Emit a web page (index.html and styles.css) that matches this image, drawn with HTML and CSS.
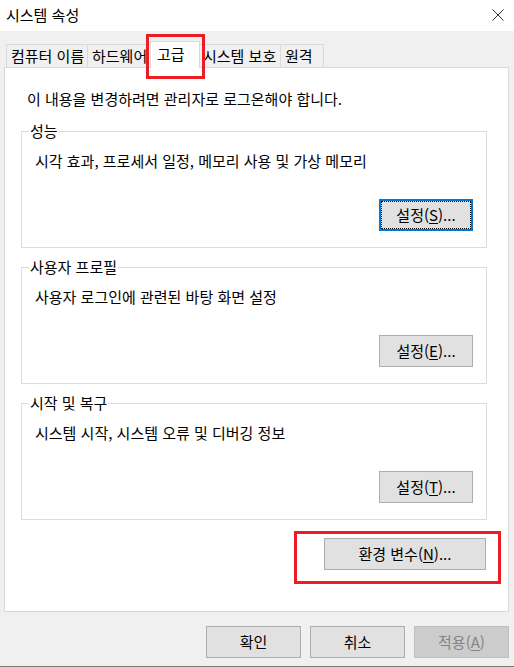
FILE: index.html
```html
<!DOCTYPE html>
<html lang="ko">
<head>
<meta charset="utf-8">
<title>시스템 속성</title>
<link rel="stylesheet" href="styles.css">
</head>
<body>
<div class="window">
  <div class="titlebar">
    <span class="title">시스템 속성</span>
    <svg class="close" width="12" height="12" viewBox="0 0 12 12"><path d="M0.5 0.5 L11.5 11.5 M11.5 0.5 L0.5 11.5" stroke="#333" stroke-width="1" fill="none"/></svg>
  </div>
  <div class="dialog">
    <div class="tabs">
      <div class="tab t1">컴퓨터 이름</div>
      <div class="tab t2">하드웨어</div>
      <div class="tab selected">고급<span class="mark mark-tab"></span></div>
      <div class="tab t4">시스템 보호</div>
      <div class="tab t5">원격</div>
    </div>
    <div class="panel">
      <p class="notice">이 내용을 변경하려면 관리자로 로그온해야 합니다.</p>
      <fieldset class="group g1">
        <legend>성능</legend>
        <p class="desc">시각 효과, 프로세서 일정, 메모리 사용 및 가상 메모리</p>
        <div class="row"><button class="btn focused">설정(<u>S</u>)...</button></div>
      </fieldset>
      <fieldset class="group g2">
        <legend>사용자 프로필</legend>
        <p class="desc">사용자 로그인에 관련된 바탕 화면 설정</p>
        <div class="row"><button class="btn">설정(<u>E</u>)...</button></div>
      </fieldset>
      <fieldset class="group g3">
        <legend>시작 및 복구</legend>
        <p class="desc">시스템 시작, 시스템 오류 및 디버깅 정보</p>
        <div class="row"><button class="btn">설정(<u>T</u>)...</button></div>
      </fieldset>
      <div class="envrow">
        <button class="btn env">환경 변수(<u>N</u>)...<span class="mark mark-env"></span></button>
      </div>
    </div>
    <div class="footer">
      <button class="btn foot">확인</button>
      <button class="btn foot">취소</button>
      <button class="btn foot disabled">적용(<u>A</u>)</button>
    </div>
  </div>
</div>
</body>
</html>
```
FILE: styles.css
```css
* { box-sizing: border-box; }
html, body { margin: 0; padding: 0; }
body {
  width: 514px;
  height: 667px;
  overflow: hidden;
  background: #f0f0f0;
  font-family: "Noto Sans CJK KR", "Noto Sans", sans-serif;
  font-size: 15px;
  color: #000;
}
.window {
  height: 667px;
  display: flex;
  flex-direction: column;
  border-bottom: 1px solid #7a7a7a;
}
.titlebar {
  height: 31px;
  background: #fff;
  display: flex;
  align-items: center;
  justify-content: space-between;
  padding: 0 10px 2px 6px;
}
.title { font-size: 15px; line-height: 20px; color: #000; }
.close { display: block; }
.dialog {
  flex: 1;
  background: #f0f0f0;
  display: flex;
  flex-direction: column;
}
.tabs {
  display: flex;
  align-items: flex-end;
  height: 27px;
  margin-top: 9px;
  padding-left: 6px;
}
.tab {
  height: 23px;
  line-height: 21px;
  padding: 0 4px;
  border: 1px solid #d9d9d9;
  border-bottom: none;
  background: #f0f0f0;
  white-space: nowrap;
  color: #000;
}
.tab + .tab { border-left: none; }
.t1 { width: 82px; }
.t2 { width: 64px; overflow: hidden; }
.t4 { width: 82px; border-left: none; }
.t5 { width: 43px; }
.tab.selected {
  position: relative;
  z-index: 2;
  height: 27px;
  width: 50px;
  margin: 0 -1px -1px -2px;
  padding: 0 6px;
  line-height: 24px;
  background: #fff;
  border: 1px solid #d9d9d9;
  border-bottom: none;
}
.mark {
  position: absolute;
  border: 3px solid #ec1c24;
  pointer-events: none;
}
.mark-tab { left: -5px; top: -8px; width: 59px; height: 45px; }
.panel {
  position: relative;
  z-index: 1;
  margin-left: 4px;
  width: 505px;
  height: 545px;
  background: #fff;
  border: 1px solid #d9d9d9;
  padding: 21px 0 0 16px;
}
.notice {
  margin: 0 0 12px 6px;
  line-height: 20px;
}
.group {
  width: 466px;
  margin: 0;
  padding: 0 13px 16px 13px;
  border: 1px solid #dcdcdc;
  min-inline-size: 0;
}
.g2, .g3 { margin-top: 9px; }
.group legend {
  padding: 0 1px;
  margin-left: -6px;
  line-height: 20px;
}
.desc {
  margin: 10px 0 0 0;
  line-height: 20px;
}
.row {
  display: flex;
  justify-content: flex-end;
  margin-top: 28px;
  margin-right: 0;
}
.btn {
  font-family: inherit;
  font-size: 15px;
  color: #000;
  background: #e1e1e1;
  border: 1px solid #adadad;
  width: 94px;
  height: 32px;
  padding: 0;
  line-height: 20px;
  position: relative;
}
.btn u { text-decoration: underline; text-underline-offset: 2px; }
.btn.focused {
  border: 1px solid #0078d7;
  box-shadow: inset 0 0 0 1px #0078d7;
  outline: 1px dotted #000;
  outline-offset: -3px;
}
.envrow {
  display: flex;
  justify-content: flex-end;
  margin-top: 18px;
  padding-right: 22px;
}
.btn.env { width: 162px; }
.mark-env { left: -31px; top: -8px; width: 207px; height: 53px; }
.footer {
  display: flex;
  justify-content: flex-end;
  gap: 9px;
  margin-top: 14px;
  padding-right: 5px;
}
.btn.foot { width: 95px; }
.btn.disabled {
  background: #cccccc;
  border-color: #bfbfbf;
  color: #838383;
}
```
